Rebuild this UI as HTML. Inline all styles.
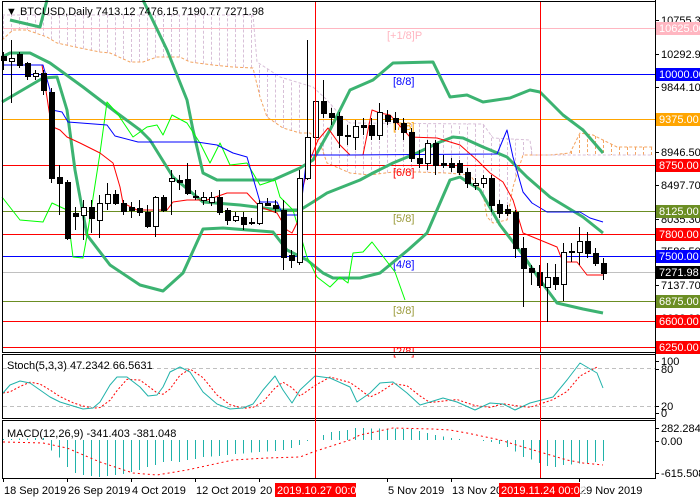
<!DOCTYPE html>
<html><head><meta charset="utf-8"><style>
html,body{margin:0;padding:0;background:#fff;width:700px;height:500px;overflow:hidden}
svg{display:block;font-family:"Liberation Sans",sans-serif;font-size:11px}
</style></head><body>
<svg id="s" width="700" height="500" viewBox="0 0 700 500" xmlns="http://www.w3.org/2000/svg">
<rect x="0" y="0" width="700" height="500" fill="#fff"/>
<g id="cloud"></g>
<g stroke-width="1" shape-rendering="crispEdges">
<line x1="2" y1="28.5" x2="655" y2="28.5" stroke="#ffb6c1"/>
<line x1="2" y1="74.5" x2="655" y2="74.5" stroke="#0000ff"/>
<line x1="2" y1="119.5" x2="655" y2="119.5" stroke="#ffa500"/>
<line x1="2" y1="165.5" x2="655" y2="165.5" stroke="#ff0000"/>
<line x1="2" y1="211.5" x2="655" y2="211.5" stroke="#6b8e23"/>
<line x1="2" y1="234.5" x2="655" y2="234.5" stroke="#ff0000"/>
<line x1="2" y1="256.5" x2="655" y2="256.5" stroke="#0000ff"/>
<line x1="2" y1="272.5" x2="655" y2="272.5" stroke="#c0c0c0"/>
<line x1="2" y1="301.5" x2="655" y2="301.5" stroke="#6b8e23"/>
<line x1="2" y1="321.5" x2="655" y2="321.5" stroke="#ff0000"/>
<line x1="2" y1="347.5" x2="655" y2="347.5" stroke="#ff0000"/>
</g>
<g font-size="11">
<text x="387" y="39" fill="#ffb6c1">[+1/8]P</text>
<text x="393" y="85" fill="#0000ff">[8/8]</text>
<text x="393" y="130" fill="#ffa500">[7/8]</text>
<text x="393" y="176" fill="#ff0000">[6/8]</text>
<text x="393" y="222" fill="#9a9a3a">[5/8]</text>
<text x="393" y="268" fill="#0000ff">[4/8]</text>
<text x="393" y="314" fill="#9a9a3a">[3/8]</text>
<text x="393" y="355" fill="#ff0000">[2/8]</text>
</g>
<g id="lines" fill="none"></g>
<g id="candles"></g>
<line x1="315.5" y1="2" x2="315.5" y2="478" stroke="#ff0000"/>
<line x1="540.5" y1="2" x2="540.5" y2="478" stroke="#ff0000"/>
<rect x="0" y="352" width="700" height="3" fill="#fff"/>
<rect x="0" y="418" width="700" height="3" fill="#fff"/>
<g id="sub" fill="none"></g>
<g fill="none" stroke="#000" shape-rendering="crispEdges">
<rect x="2.5" y="1.5" width="653" height="351"/>
<rect x="2.5" y="354.5" width="653" height="64"/>
<rect x="2.5" y="420.5" width="653" height="58"/>
</g>
<line x1="315.5" y1="355" x2="315.5" y2="478" stroke="#ff0000"/>
<line x1="540.5" y1="355" x2="540.5" y2="478" stroke="#ff0000"/>
<text x="6" y="15" fill="#000">▼ BTCUSD,Daily  7413.12 7476.15 7190.77 7271.98</text>
<text x="7" y="369">Stoch(5,3,3) 47.2342 66.5631</text>
<text x="7" y="437">MACD(12,26,9) -341.403 -381.048</text>
<g id="axis"></g>
</svg>
<script>
var NS="http://www.w3.org/2000/svg";
function el(p,t,a,txt){var e=document.createElementNS(NS,t);for(var k in a)e.setAttribute(k,a[k]);if(txt!==undefined)e.textContent=txt;p.appendChild(e);return e;}
function pl(p,pts,c,w,dash){var s=pts.map(function(q){return q[0]+","+q[1]}).join(" ");var a={points:s,stroke:c,"stroke-width":w,fill:"none","stroke-linejoin":"round"};if(dash)a["stroke-dasharray"]=dash;return el(p,"polyline",a);}
function interp(pts,x){if(x<=pts[0][0])return pts[0][1];for(var i=1;i<pts.length;i++){if(x<=pts[i][0]){var a=pts[i-1],b=pts[i];return a[1]+(b[1]-a[1])*(x-a[0])/(b[0]-a[0]);}}return pts[pts.length-1][1];}
var L=document.getElementById("lines"),C=document.getElementById("candles"),CL=document.getElementById("cloud"),S=document.getElementById("sub"),A=document.getElementById("axis");
var spA=[[2,40],[13,30],[27,30],[47,37],[57,43],[80,48],[100,52],[110,53],[130,62],[143,62],[157,57],[180,57],[190,62],[213,65],[233,67],[253,68],[260,97],[267,117],[283,128],[300,133],[310,133],[320,143],[327,163],[350,173],[370,175],[393,172],[417,172],[447,173],[470,175],[483,193],[487,217],[493,223],[507,220],[513,187],[523,155],[550,155],[570,153],[580,133],[593,135],[603,140],[617,147],[653,147]];
var spB=[[2,15],[213,15],[253,15],[257,62],[280,77],[313,87],[327,100],[340,115],[350,123],[483,124],[493,138],[530,140],[532,155],[570,155],[653,155]];
for(var x=3;x<=651;x+=8){var a=interp(spA,x),b=interp(spB,x);el(CL,"line",{x1:x+.5,y1:a,x2:x+.5,y2:b,stroke:(a>b?"#d8bfd8":"#f4a460"),"stroke-dasharray":"3,2","stroke-width":1});}
pl(CL,spA,"#f4a460",1,"3,2");pl(CL,spB,"#d8bfd8",1,"3,2");
var up=[[10,20],[40,27],[47,0]];
var up2=[[143,0],[167,50],[187,100],[193,130],[203,173],[217,180],[273,180],[300,168],[313,160],[330,130],[350,90],[373,80],[393,63],[433,62],[450,97],[467,95],[483,102],[510,98],[530,90],[540,92],[563,115],[583,130],[603,153]];
var mid=[[2,57],[10,53],[30,53],[50,63],[83,87],[117,113],[140,130],[150,140],[173,177],[203,202],[240,205],[280,210],[300,210],[313,202],[327,193],[360,180],[373,173],[393,163],[417,153],[440,142],[453,137],[463,138],[483,147],[507,157],[527,177],[550,197],[583,217],[603,233]];
var low=[[2,102],[43,78],[57,77],[67,110],[75,170],[87,235],[110,265],[140,285],[163,291],[183,273],[203,229],[223,228],[273,232],[287,250],[307,260],[323,273],[333,278],[360,278],[380,273],[408,250],[427,233],[450,180],[460,177],[480,190],[500,225],[523,255],[540,280],[557,303],[583,309],[603,313]];
var G="#3cb371";
pl(L,up,G,3);pl(L,up2,G,3);pl(L,mid,G,3);pl(L,low,G,3);
pl(L,[[2,197],[20,220],[43,222],[52,203],[67,210],[73,257],[83,258],[88,230],[100,153],[107,102],[117,113],[133,137],[147,127],[157,125],[163,135],[172,115],[187,123],[200,143],[210,163],[220,143],[230,165],[247,163],[260,185],[275,180],[280,197],[293,210],[307,257],[317,277],[330,287],[340,277],[348,283],[353,253],[363,252],[372,242],[395,272],[405,300]],"#00ff00",1);
pl(L,[[3,65],[42,65],[50,117],[53,127],[60,130],[67,137],[80,143],[100,153],[113,163],[120,187],[123,203],[137,210],[167,210],[173,202],[187,200],[207,200],[227,193],[247,193],[260,207],[277,213],[287,230],[292,233],[300,217],[303,187],[310,160],[318,140],[328,128],[340,145],[350,155],[363,155],[372,110],[380,113],[390,115],[410,137],[437,138],[460,145],[477,160],[490,173],[503,182],[513,200],[523,233],[540,240],[557,247],[563,262],[577,262],[587,275],[603,275]],"#ff0000",1);
pl(L,[[3,65],[43,65],[50,90],[52,110],[62,112],[68,122],[107,125],[115,136],[138,142],[197,142],[217,145],[233,153],[247,157],[260,202],[277,202],[283,215],[300,215],[307,155],[350,155],[497,154],[507,130],[513,157],[523,192],[532,203],[547,212],[580,212],[590,218],[603,222]],"#0000ff",1);
var D=[[56,60,0,52,70],[58,61,1,40,103],[54,65,0,52,68],[63,76,0,62,80],[73,76,1,70,80],[73,90,0,70,95],[92,178,0,88,183],[177,183,0,165,215],[182,238,0,180,240],[213,216,0,207,230],[207,215,1,200,240],[207,218,0,200,233],[203,220,1,195,238],[194,203,1,183,210],[194,203,0,190,205],[203,211,0,200,215],[207,210,0,202,218],[208,212,0,200,216],[212,226,0,205,228],[197,226,1,196,237],[197,210,0,195,212],[178,181,1,170,215],[180,182,0,175,190],[179,193,0,163,195],[196,197,0,190,200],[197,200,1,192,205],[197,202,1,192,206],[197,212,0,190,215],[210,220,0,208,225],[216,220,1,212,222],[217,224,0,212,230],[222,223,0,218,225],[203,223,1,200,225],[203,205,0,198,206],[205,208,0,200,213],[210,257,0,200,270],[255,260,0,250,268],[178,262,1,170,265],[137,178,1,40,180],[101,137,1,78,140],[101,113,0,80,118],[113,117,0,108,125],[116,135,0,112,148],[135,136,0,125,145],[126,137,1,120,150],[125,127,0,118,135],[125,135,0,118,140],[112,135,1,103,140],[115,121,0,110,125],[118,122,0,112,130],[123,132,0,118,140],[132,158,0,128,162],[158,163,0,150,168],[143,163,1,140,170],[143,165,0,140,175],[163,165,0,155,168],[163,167,0,158,172],[163,172,0,160,175],[172,183,0,168,188],[183,185,1,178,190],[178,183,1,175,188],[178,205,0,175,212],[204,213,0,200,218],[209,213,0,205,216],[212,248,0,210,258],[248,268,0,237,307],[268,272,0,265,285],[272,285,0,265,288],[277,287,1,263,322],[277,284,0,264,290],[252,284,1,243,301],[251,252,1,243,262],[241,252,1,227,265],[241,253,0,232,258],[253,263,0,248,266],[263,273,0,258,280]];
D.forEach(function(d,i){var x=3+8*i;el(C,"line",{x1:x+.5,y1:d[3],x2:x+.5,y2:d[4],stroke:"#000","shape-rendering":"crispEdges"});
el(C,"rect",{x:x-2+.5,y:d[0]+.5,width:5,height:Math.max(1,d[1]-d[0]),fill:d[2]?"#fff":"#000",stroke:"#000","shape-rendering":"crispEdges"});});
el(S,"line",{x1:3,y1:368.5,x2:655,y2:368.5,stroke:"#c0c0c0","stroke-dasharray":"4,3"});
el(S,"line",{x1:3,y1:406.5,x2:655,y2:406.5,stroke:"#c0c0c0","stroke-dasharray":"4,3"});
var st=[[3,393],[10,385],[20,381],[30,383],[40,390],[50,397],[60,402],[73,406],[83,409],[93,408],[100,402],[110,385],[117,377],[127,377],[140,387],[148,396],[157,395],[163,387],[170,372],[180,367],[190,372],[203,392],[217,404],[230,409],[243,408],[253,404],[263,390],[275,376],[283,390],[292,403],[300,390],[315,376],[330,378],[350,387],[357,402],[370,393],[380,383],[393,382],[407,393],[420,405],[430,402],[443,398],[457,402],[475,410],[490,403],[503,404],[515,410],[530,403],[553,397],[567,380],[580,363],[597,373],[603,388]];
var sg=st.map(function(p){var x=p[0];return [x,(interp(st,x-4)+interp(st,x-10)+interp(st,x-16))/3];});
sg=sg.filter(function(p){return p[0]<=600;});
pl(S,sg,"#ff0000",1,"2,2");pl(S,st,"#20b2aa",1);
var hp=[[3,439],[43,438],[52,452],[60,458],[68,468],[75,473],[83,475],[91,476],[99,477],[107,476],[115,475],[123,474],[131,472],[139,470],[147,467],[155,465],[163,462],[171,461],[179,462],[187,460],[195,459],[203,457],[219,456],[235,454],[259,452],[275,451],[283,450],[291,448],[299,445],[307,441],[315,440],[323,435],[331,432],[339,431],[347,430],[355,428],[412,429],[420,431],[436,435],[452,438],[467,440],[483,441],[491,442],[499,444],[507,447],[516,452],[523,457],[532,460],[547,466],[555,467],[563,465],[587,463],[604,461]];
for(var i=0;i<76;i++){var x=3+8*i,v=interp(hp,x);if(Math.abs(v-440)<1)continue;el(S,"line",{x1:x+.5,y1:440,x2:x+.5,y2:v,stroke:"#20b2aa","shape-rendering":"crispEdges"});}
pl(S,[[3,442],[43,443],[67,448],[100,462],[133,473],[157,475],[187,470],[233,460],[267,458],[300,457],[313,452],[350,440],[360,435],[393,428],[433,429],[450,430],[467,433],[500,440],[523,447],[540,452],[567,460],[583,463],[603,465]],"#ff0000",1,"2,3");
el(A,"line",{x1:655.5,y1:0,x2:655.5,y2:479,stroke:"#000"});
[["10755.30",20],["10292.90",54],["9844.10",87],["8946.50",152],["8497.70",185],["8035.30",219],["7586.50",251],["7137.70",285],["6688.90",318],["100",361],["80",369],["20",406],["0",413],["282.284",428],["0.00",441],["-615.508",473]].forEach(function(t){el(A,"line",{x1:655,y1:t[1]+.5,x2:659,y2:t[1]+.5,stroke:"#000"});el(A,"text",{x:661,y:t[1]+4},t[0]);});
[["10625.00",28,"#ffb6c1"],["10000.00",74,"#0000ff"],["9375.00",119,"#ffa500"],["8750.00",165,"#ff0000"],["8125.00",211,"#6b8e23"],["7800.00",234,"#ff0000"],["7500.00",256,"#0000ff"],["7271.98",272,"#000000"],["6875.00",301,"#6b8e23"],["6600.00",321,"#ff0000"],["6250.00",347,"#ff0000"]].forEach(function(t){el(A,"rect",{x:656,y:t[1]-6,width:44,height:13,fill:t[2]});el(A,"text",{x:659,y:t[1]+4,fill:"#fff"},t[0]);});
[["18 Sep 2019",3],["26 Sep 2019",67],["4 Oct 2019",131],["12 Oct 2019",195],["20 Oct 2019",259],["5 Nov 2019",387],["13 Nov 2019",451],["29 Nov 2019",579]].forEach(function(t){el(A,"line",{x1:t[1]+.5,y1:478,x2:t[1]+.5,y2:482,stroke:"#000"});el(A,"text",{x:t[1]+1,y:494},t[0]);});
[["2019.10.27 00:00",275],["2019.11.24 00:00",499]].forEach(function(t){el(A,"rect",{x:t[1],y:483,width:81,height:14,fill:"#ff0000"});el(A,"text",{x:t[1]+2,y:494,fill:"#fff"},t[0]);});
</script>
</body></html>
